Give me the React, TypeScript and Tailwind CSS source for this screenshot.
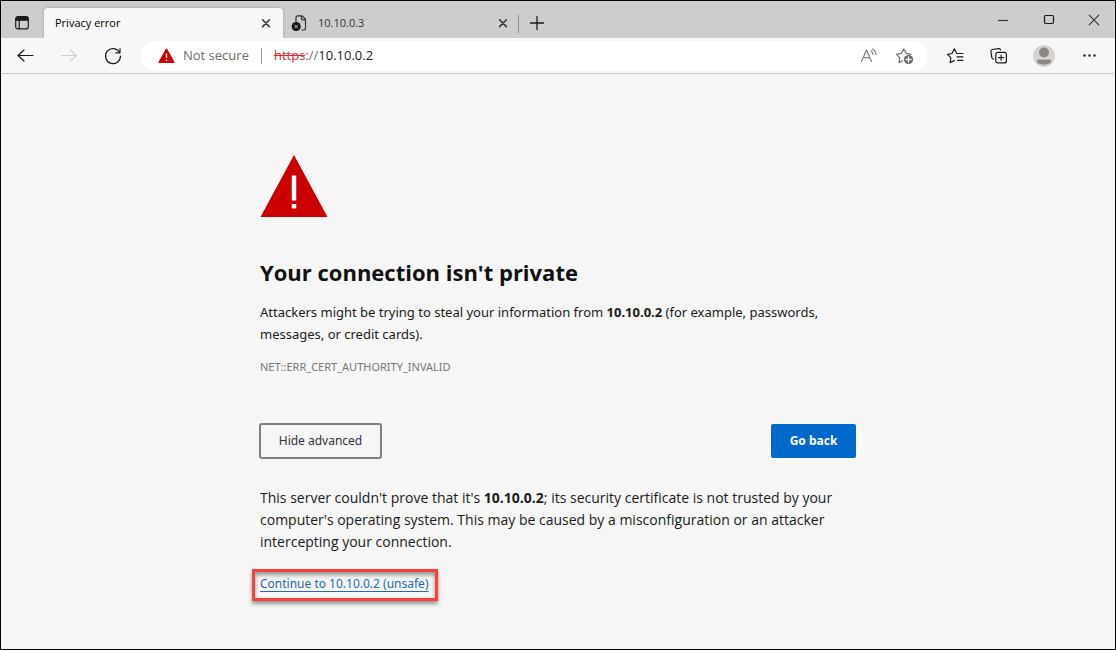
import type { ReactNode } from "react";

function Icon({ size = 20, children, className = "" }: { size?: number; children: ReactNode; className?: string }) {
  return (
    <svg
      width={size}
      height={size}
      viewBox={`0 0 ${size} ${size}`}
      fill="none"
      stroke="currentColor"
      strokeWidth="1.2"
      strokeLinecap="round"
      strokeLinejoin="round"
      aria-hidden="true"
      className={`block shrink-0 ${className}`}
    >
      {children}
    </svg>
  );
}

function IconButton({ label, children, className = "" }: { label: string; children: ReactNode; className?: string }) {
  return (
    <button type="button" aria-label={label} className={`flex shrink-0 items-center justify-center ${className}`}>
      {children}
    </button>
  );
}

function CloseIcon() {
  return (
    <Icon size={10}>
      <path d="M1.6 1.8l6.800 6.800M8.400 1.800l-6.800 6.800" stroke="#333" strokeWidth="1.500" />
    </Icon>
  );
}

function TabStrip() {
  return (
    <header className="flex h-[37px] items-end bg-[#cdcdcd]">
      <IconButton label="Tab actions menu" className="h-[30px] w-[43px] pr-px">
        <Icon size={16}>
          <rect x="1.7" y="1.7" width="12.6" height="12.2" rx="2.2" />
          <path d="M2 4.2c0-1.400.8-2.200 2.200-2.200h7.600c1.400 0 2.200.8 2.200 2.200v1H2z" fill="currentColor" />
          <path d="M5.200 5v8.700" />
        </Icon>
      </IconButton>
      <div className="flex h-[30px] w-[239px] items-center justify-between rounded-t-[4px] bg-[#f7f7f7] pr-[11px] pl-[11px] shadow-[0_0_3px_#00000040] [clip-path:inset(-3px_-3px_0)]">
        <button type="button" className="text-black">Privacy error</button>
        <IconButton label="Close Privacy error" className="size-3">
          <CloseIcon />
        </IconButton>
      </div>
      <div className="flex h-[30px] w-[235px] items-center pr-[9px] pl-2">
        <Icon size={18}>
          <path d="M5 7.500V3.500c0-1 .6-1.700 1.700-1.700h4.200l3.600 3.500v8.800c0 1.200-.7 1.900-1.800 1.900h-2M10.400 2v2.500c0 .8.500 1.300 1.300 1.300h2.700" stroke="#333" />
          <circle cx="5.200" cy="12.500" r="4.500" fill="#111" stroke="none" />
          <path d="M3.800 11.100l2.800 2.800M6.600 11.100l-2.800 2.800" stroke="#ddd" strokeWidth="1" />
        </Icon>
        <button type="button" className="ml-[9px] grow text-left text-[#333]">10.10.0.3</button>
        <IconButton label="Close 10.10.0.3" className="size-3">
          <CloseIcon />
        </IconButton>
      </div>
      <div className="mb-[5px] h-[18px] w-px bg-[#969696]" />
      <IconButton label="New tab" className="h-[30px] w-[35px]">
        <Icon size={16}>
          <path d="M8 1.500v13M1.500 8h13" strokeWidth="1.300" />
        </Icon>
      </IconButton>
      <div className="ml-auto flex h-full items-center">
        <IconButton label="Minimize" className="h-full w-[46px]">
          <Icon size={12}>
            <path d="M1 6.500h10" strokeLinecap="butt" stroke="#333" />
          </Icon>
        </IconButton>
        <IconButton label="Maximize" className="h-full w-[46px]">
          <Icon size={12}>
            <rect x="1.500" y="1.500" width="9" height="8" rx="1.200" />
          </Icon>
        </IconButton>
        <IconButton label="Close window" className="h-full w-[43px]">
          <Icon size={12}>
            <path d="M1.200 1.200l9.600 9.600M10.800 1.200l-9.600 9.600" stroke="#333" strokeWidth="1.100" />
          </Icon>
        </IconButton>
      </div>
    </header>
  );
}

function AddressBar() {
  return (
    <div className="ml-[18px] flex h-[30px] min-w-0 grow items-center rounded-full bg-white pr-[13px] pl-[17px]">
      <button type="button" className="flex shrink-0 items-center gap-2 text-[13px] text-[#6b6b6b]">
        <svg width="17" height="16" viewBox="0 0 17 16" aria-hidden="true">
          <path d="M8.500 1.500l7.200 12.700H1.300z" fill="#cc0000" stroke="#cc0000" strokeWidth="1.600" strokeLinejoin="round" />
          <path d="M8.500 5.500v4.300M8.500 11.500v1.500" stroke="#fff" strokeWidth="1.400" />
        </svg>
        Not secure
      </button>
      <div className="ml-3 h-4 w-px shrink-0 bg-[#9a9a9a]" />
      <a href="https://10.10.0.2" className="ml-3 grow text-[13px] text-[#1b1b1b]">
        <span className="text-[#d92d2d] line-through">https</span>
        <span className="text-[#6b6b6b]">://</span>10.10.0.2
      </a>
      <IconButton label="Read aloud" className="mr-[17px] text-[#808080]">
        <Icon size={18}>
          <path d="M1.500 14.500L6.500 3l5 11.500M3.300 10.700h6.500" strokeWidth="1.200" />
          <path d="M10.800 3.800c1.200.8 2 2 2.100 3.500M12.500 2c1.900 1.200 3.200 3 3.300 5.300" strokeWidth="1.200" />
        </Icon>
      </IconButton>
      <IconButton label="Add this page to favorites" className="text-[#707070]">
        <Icon size={20}>
          <path d="M7.500 14.800l-3.300 1.800.5-4.900L1.500 8.300l4.800-1L8.800 3l2.500 4.300 4.700 1" />
          <circle cx="13.500" cy="13.500" r="4.600" fill="#666" stroke="none" />
          <path d="M13.500 11v5M11 13.500h5" stroke="#fff" strokeWidth="1.300" />
        </Icon>
      </IconButton>
    </div>
  );
}

function Toolbar() {
  return (
    <nav aria-label="Browser toolbar" className="flex h-[36px] items-center border-b border-[#c9c9c9] bg-[#f7f7f7]">
      <IconButton label="Back" className="ml-[14px]">
        <Icon size={20}>
          <path d="M18 9.500H3M9 4L3 9.500 9 15" />
        </Icon>
      </IconButton>
      <IconButton label="Forward" className="ml-[24px] text-[#cfcfcf]">
        <Icon size={20}>
          <path d="M2.500 9.500H17.500M11.500 4l6 5.500-6 5.500" />
        </Icon>
      </IconButton>
      <IconButton label="Refresh" className="ml-[24px]">
        <Icon size={20}>
          <path d="M16.500 6.300A7.500 7.500 0 1 0 17.500 10M17 2.500v4.300h-4.300" />
        </Icon>
      </IconButton>
      <AddressBar />
      <IconButton label="Favorites" className="ml-[18px]">
        <Icon size={20}>
          <path d="M17 7.500h-6.200L8.300 2.800 6 7.500l-4.500.9 3.300 3.300-.6 4.900 4.100-2.100M11 10.800h6M11.500 14.300H17" />
        </Icon>
      </IconButton>
      <IconButton label="Collections" className="ml-[23px]">
        <Icon size={20}>
          <rect x="6.800" y="6.300" width="10.600" height="10.600" rx="2" />
          <path d="M12.100 9v5.200M9.500 11.600h5.200" />
          <path d="M4.600 13.200c-1.100-.2-1.600-.8-1.800-1.800L1.900 5.600c-.1-1.200.4-1.900 1.500-2.100l6-.9c1.200-.2 2 .3 2.200 1.400" />
        </Icon>
      </IconButton>
      <IconButton label="Profile" className="ml-[24px]">
        <svg width="22" height="22" viewBox="0 0 22 22" aria-hidden="true">
          <circle cx="11" cy="11" r="11" fill="#d5d2d0" />
          <circle cx="11" cy="7.500" r="5" fill="#8b8785" />
          <path d="M3.300 15.200c0-.8.400-1.200 1.200-1.200h13c.8 0 1.200.4 1.200 1.200 0 3-3.400 5-7.700 5s-7.700-2-7.700-5z" fill="#8b8785" stroke="#e2dfdd" strokeWidth="1" />
        </svg>
      </IconButton>
      <IconButton label="Settings and more" className="mr-[15px] ml-[25px]">
        <svg width="20" height="20" viewBox="0 0 20 20" fill="#333" aria-hidden="true">
          <circle cx="4.500" cy="9.500" r="1.300" />
          <circle cx="9.500" cy="9.500" r="1.300" />
          <circle cx="14.500" cy="9.500" r="1.300" />
        </svg>
      </IconButton>
    </nav>
  );
}

export default function App() {
  return (
    <div className="flex min-h-screen flex-col border border-black bg-[#f6f6f6] font-['Open_Sans','Noto_Sans',sans-serif] text-[11px] text-[#1b1b1b]">
      <TabStrip />
      <Toolbar />
      <main className="mx-auto w-full max-w-[596px] pt-[81px] pb-12 font-['Noto_Sans','Open_Sans',sans-serif] text-[13px] leading-[22px]">
        <svg width="68" height="62" viewBox="0 0 68 62" aria-hidden="true">
          <path d="M34 0l33.500 62H.5z" fill="#cc0000" />
          <path d="M34 20.500v25M34 49v4.500" stroke="#fff" strokeWidth="4.500" />
        </svg>
        <h1 className="mt-[39px] font-['Open_Sans','Noto_Sans',sans-serif] text-[22px] leading-[32px] font-bold text-[#111]">
          Your connection isn't private
        </h1>
        <p className="mt-[13px]">
          Attackers might be trying to steal your information from <strong>10.10.0.2</strong> (for example, passwords,
          messages, or credit cards).
        </p>
        <p className="mt-[11px] text-[11px] text-[#767676]">NET::ERR_CERT_AUTHORITY_INVALID</p>
        <div className="mt-[46px] flex justify-between">
          <button
            type="button"
            className="h-[34px] w-[121px] rounded-[2px] text-[12px] text-[#333] outline-2 outline-offset-[-1px] outline-[#808080]"
          >
            Hide advanced
          </button>
          <button type="button" className="h-[34px] w-[85px] rounded-[2px] bg-[#0069cb] text-[12px] font-bold text-white">
            Go back
          </button>
        </div>
        <p className="mt-[29px] font-['Open_Sans','Noto_Sans',sans-serif] text-[14px]">
          This server couldn't prove that it's <strong>10.10.0.2</strong>; its security certificate is not trusted by your
          computer's operating system. This may be caused by a misconfiguration or an attacker intercepting your
          connection.
        </p>
        <div className="-ml-2 mt-[16px] inline-block border-3 border-[#fb4040] pr-[7px] pb-[3px] pl-[5px] shadow-[0_3px_4px_#00000066,inset_0_3px_4px_#00000066]">
          <a href="#proceed" className="text-[12px] text-[#2868b8] underline underline-offset-[3px]">
            Continue to 10.10.0.2 (unsafe)
          </a>
        </div>
      </main>
    </div>
  );
}
